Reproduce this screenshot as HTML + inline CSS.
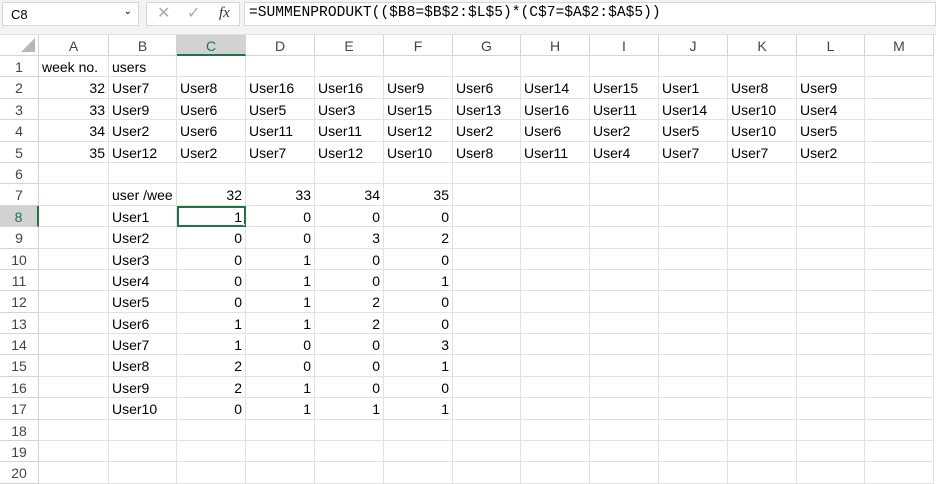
<!DOCTYPE html>
<html><head><meta charset="utf-8"><style>
*{margin:0;padding:0;box-sizing:border-box}
body{width:936px;height:482px;overflow:hidden;background:#fff;font-family:"Liberation Sans",sans-serif;font-size:14px;color:#000;position:relative}
.top{position:absolute;left:0;top:0;width:936px;height:35px;background:#f3f3f3;border-bottom:1px solid #e0e0e0}
.nb{position:absolute;left:2px;top:2px;width:137px;height:24px;background:#fff;border:1px solid #d6d6d6;font-size:13px;padding:4px 8px}
.nb span{position:absolute;right:6px;top:3px;font-size:10px}
.fx{position:absolute;left:146px;top:2px;width:94px;height:24px;background:#fff;border:1px solid #d6d6d6;color:#aaa;font-size:16px}
.fb{position:absolute;left:244px;top:2px;width:692px;height:24px;background:#fff;border:1px solid #d6d6d6;font-family:"Liberation Mono",monospace;font-size:14.6px;padding:2px 4px}
#g{position:absolute;left:0;top:35px;display:grid;grid-template-columns:39px 70px 68px 69px 69px 69px 69px 68px 69px 69px 69px 69px 68px 69px;grid-template-rows:21px repeat(20,21.4px)}
#g div{border-right:1px solid #e1e1e1;border-bottom:1px solid #e1e1e1;padding:1px 3px 0;white-space:nowrap;overflow:hidden;line-height:21px}
#g .h{text-align:center;color:#444;border-color:#d4d4d4}
#g .r{text-align:right}
#g .s{background:#d2d2d2;border-bottom:2px solid #217346;color:#217346}
#g .rs{background:#d2d2d2;color:#217346;border-right:2px solid #217346}
#g .sel{outline:2px solid #217346;outline-offset:-2px;position:relative}
</style></head><body>
<div class="top">
<div class="nb">C8<span>&#8964;</span></div>
<div class="fx"><span style="position:absolute;left:10px;top:0">✕</span><span style="position:absolute;left:40px;top:0">✓</span><span style="position:absolute;left:72px;top:2px;color:#333;font-family:'Liberation Serif',serif;font-style:italic;font-size:15px">fx</span></div>
<div class="fb">=SUMMENPRODUKT(($B8=$B$2:$L$5)*(C$7=$A$2:$A$5))</div>
</div>
<div id="g">
<div class="h" style="position:relative"><span style="position:absolute;right:3px;bottom:3px;width:0;height:0;border-left:14px solid transparent;border-bottom:14px solid #b7b7b7"></span></div><div class="h">A</div><div class="h">B</div><div class="h s">C</div><div class="h">D</div><div class="h">E</div><div class="h">F</div><div class="h">G</div><div class="h">H</div><div class="h">I</div><div class="h">J</div><div class="h">K</div><div class="h">L</div><div class="h">M</div>
<div class="h">1</div><div>week no.</div><div>users</div><div></div><div></div><div></div><div></div><div></div><div></div><div></div><div></div><div></div><div></div><div></div>
<div class="h">2</div><div class="r">32</div><div>User7</div><div>User8</div><div>User16</div><div>User16</div><div>User9</div><div>User6</div><div>User14</div><div>User15</div><div>User1</div><div>User8</div><div>User9</div><div></div>
<div class="h">3</div><div class="r">33</div><div>User9</div><div>User6</div><div>User5</div><div>User3</div><div>User15</div><div>User13</div><div>User16</div><div>User11</div><div>User14</div><div>User10</div><div>User4</div><div></div>
<div class="h">4</div><div class="r">34</div><div>User2</div><div>User6</div><div>User11</div><div>User11</div><div>User12</div><div>User2</div><div>User6</div><div>User2</div><div>User5</div><div>User10</div><div>User5</div><div></div>
<div class="h">5</div><div class="r">35</div><div>User12</div><div>User2</div><div>User7</div><div>User12</div><div>User10</div><div>User8</div><div>User11</div><div>User4</div><div>User7</div><div>User7</div><div>User2</div><div></div>
<div class="h">6</div><div></div><div></div><div></div><div></div><div></div><div></div><div></div><div></div><div></div><div></div><div></div><div></div><div></div>
<div class="h">7</div><div></div><div>user /wee</div><div class="r">32</div><div class="r">33</div><div class="r">34</div><div class="r">35</div><div></div><div></div><div></div><div></div><div></div><div></div><div></div>
<div class="h rs">8</div><div></div><div>User1</div><div class="r sel">1<span style="position:absolute;right:-3px;bottom:-3px;width:5px;height:5px;background:#217346;border:1px solid #fff"></span></div><div class="r">0</div><div class="r">0</div><div class="r">0</div><div></div><div></div><div></div><div></div><div></div><div></div><div></div>
<div class="h">9</div><div></div><div>User2</div><div class="r">0</div><div class="r">0</div><div class="r">3</div><div class="r">2</div><div></div><div></div><div></div><div></div><div></div><div></div><div></div>
<div class="h">10</div><div></div><div>User3</div><div class="r">0</div><div class="r">1</div><div class="r">0</div><div class="r">0</div><div></div><div></div><div></div><div></div><div></div><div></div><div></div>
<div class="h">11</div><div></div><div>User4</div><div class="r">0</div><div class="r">1</div><div class="r">0</div><div class="r">1</div><div></div><div></div><div></div><div></div><div></div><div></div><div></div>
<div class="h">12</div><div></div><div>User5</div><div class="r">0</div><div class="r">1</div><div class="r">2</div><div class="r">0</div><div></div><div></div><div></div><div></div><div></div><div></div><div></div>
<div class="h">13</div><div></div><div>User6</div><div class="r">1</div><div class="r">1</div><div class="r">2</div><div class="r">0</div><div></div><div></div><div></div><div></div><div></div><div></div><div></div>
<div class="h">14</div><div></div><div>User7</div><div class="r">1</div><div class="r">0</div><div class="r">0</div><div class="r">3</div><div></div><div></div><div></div><div></div><div></div><div></div><div></div>
<div class="h">15</div><div></div><div>User8</div><div class="r">2</div><div class="r">0</div><div class="r">0</div><div class="r">1</div><div></div><div></div><div></div><div></div><div></div><div></div><div></div>
<div class="h">16</div><div></div><div>User9</div><div class="r">2</div><div class="r">1</div><div class="r">0</div><div class="r">0</div><div></div><div></div><div></div><div></div><div></div><div></div><div></div>
<div class="h">17</div><div></div><div>User10</div><div class="r">0</div><div class="r">1</div><div class="r">1</div><div class="r">1</div><div></div><div></div><div></div><div></div><div></div><div></div><div></div>
<div class="h">18</div><div></div><div></div><div></div><div></div><div></div><div></div><div></div><div></div><div></div><div></div><div></div><div></div><div></div>
<div class="h">19</div><div></div><div></div><div></div><div></div><div></div><div></div><div></div><div></div><div></div><div></div><div></div><div></div><div></div>
<div class="h">20</div><div></div><div></div><div></div><div></div><div></div><div></div><div></div><div></div><div></div><div></div><div></div><div></div><div></div>
</div>
</body></html>
